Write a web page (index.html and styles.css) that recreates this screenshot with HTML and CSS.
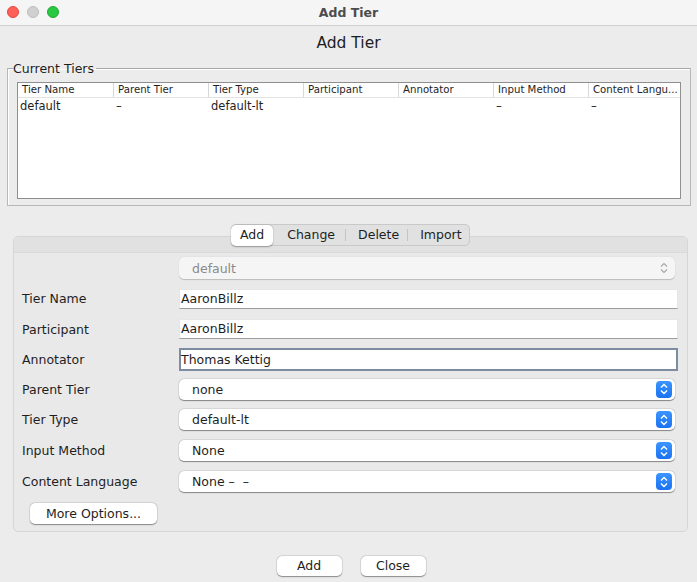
FILE: index.html
```html
<!DOCTYPE html>
<html>
<head>
<meta charset="utf-8">
<link rel="stylesheet" href="styles.css">
</head>
<body>
<div class="window">
  <div class="titlebar">
    <div class="lights">
      <span class="light red"></span>
      <span class="light grey"></span>
      <span class="light green"></span>
    </div>
    <div class="wtitle">Add Tier</div>
  </div>
  <div class="content">
    <div class="heading">Add Tier</div>
    <fieldset class="group">
      <legend>Current Tiers</legend>
      <div class="table">
        <div class="row head">
          <div class="cell">Tier Name</div>
          <div class="cell">Parent Tier</div>
          <div class="cell">Tier Type</div>
          <div class="cell">Participant</div>
          <div class="cell">Annotator</div>
          <div class="cell">Input Method</div>
          <div class="cell last">Content Langu...</div>
        </div>
        <div class="row data">
          <div class="cell">default</div>
          <div class="cell">–</div>
          <div class="cell">default-lt</div>
          <div class="cell"></div>
          <div class="cell"></div>
          <div class="cell">–</div>
          <div class="cell last">–</div>
        </div>
      </div>
    </fieldset>

    <div class="tabwrap">
      <div class="tabs">
        <div class="tab sel">Add</div>
        <div class="tab t-change">Change</div>
        <div class="sep"></div>
        <div class="tab t-delete">Delete</div>
        <div class="sep"></div>
        <div class="tab t-import">Import</div>
      </div>
      <div class="panel">
        <div class="band"></div>
        <div class="form">
          <div class="frow r1">
            <div class="label"></div>
            <div class="combo disabled"><span>default</span>
              <svg class="arrows" width="10" height="14" viewBox="0 0 10 14"><path d="M2 5.5 L5 2.5 L8 5.5 M2 8.5 L5 11.5 L8 8.5" fill="none" stroke="#a8a8a8" stroke-width="1.2"/></svg>
            </div>
          </div>
          <div class="frow r2">
            <div class="label">Tier Name</div>
            <div class="field">AaronBillz</div>
          </div>
          <div class="frow r3">
            <div class="label">Participant</div>
            <div class="field">AaronBillz</div>
          </div>
          <div class="frow r4">
            <div class="label">Annotator</div>
            <div class="field focus">Thomas Kettig</div>
          </div>
          <div class="frow r5">
            <div class="label">Parent Tier</div>
            <div class="combo"><span>none</span><span class="btn"><svg width="10" height="14" viewBox="0 0 10 14"><path d="M2 5.5 L5 2.5 L8 5.5 M2 8.5 L5 11.5 L8 8.5" fill="none" stroke="#fff" stroke-width="1.4"/></svg></span></div>
          </div>
          <div class="frow r6">
            <div class="label">Tier Type</div>
            <div class="combo"><span>default-lt</span><span class="btn"><svg width="10" height="14" viewBox="0 0 10 14"><path d="M2 5.5 L5 2.5 L8 5.5 M2 8.5 L5 11.5 L8 8.5" fill="none" stroke="#fff" stroke-width="1.4"/></svg></span></div>
          </div>
          <div class="frow r7">
            <div class="label">Input Method</div>
            <div class="combo"><span>None</span><span class="btn"><svg width="10" height="14" viewBox="0 0 10 14"><path d="M2 5.5 L5 2.5 L8 5.5 M2 8.5 L5 11.5 L8 8.5" fill="none" stroke="#fff" stroke-width="1.4"/></svg></span></div>
          </div>
          <div class="frow r8">
            <div class="label">Content Language</div>
            <div class="combo"><span>None –&nbsp; –</span><span class="btn"><svg width="10" height="14" viewBox="0 0 10 14"><path d="M2 5.5 L5 2.5 L8 5.5 M2 8.5 L5 11.5 L8 8.5" fill="none" stroke="#fff" stroke-width="1.4"/></svg></span></div>
          </div>
          <div class="more">
            <div class="button">More Options...</div>
          </div>
        </div>
      </div>
    </div>

    <div class="footer">
      <div class="button fb">Add</div>
      <div class="button fb">Close</div>
    </div>
  </div>
</div>
</body>
</html>
```
FILE: styles.css
```css
* { box-sizing: border-box; }
html, body { margin: 0; padding: 0; }
body {
  width: 697px;
  height: 582px;
  overflow: hidden;
  background: #ececec;
  font-family: "DejaVu Sans", "Noto Sans", sans-serif;
  color: #1e1e1e;
}
.window { width: 697px; height: 582px; background: #ececec; }
.titlebar {
  height: 26px;
  background: #f5f5f5;
  border-bottom: 1px solid #cfcfcf;
  display: flex;
  align-items: center;
  justify-content: center;
  position: relative;
}
.lights {
  position: absolute;
  left: 7px;
  top: 6px;
  display: flex;
  gap: 8px;
}
.light { width: 12px; height: 12px; border-radius: 50%; display: block; }
.red { background: #fe5f57; border: 0.5px solid #e2463f; }
.grey { background: #d0d0d0; border: 0.5px solid #bdbdbd; }
.green { background: #28c840; border: 0.5px solid #1ea931; }
.wtitle { font-size: 12.5px; font-weight: bold; color: #4c4c4c; }

.content { padding: 0 7px 0 7px; }
.heading {
  text-align: center;
  font-size: 15.5px;
  color: #1e1e1e;
  height: 36px;
  padding-top: 8px;
}
.group {
  margin: 0;
  border: 1px solid #b8b8b8;
  border-top-color: #a8a8a8;
  padding: 0 9px 6px 9px;
  box-shadow: inset 1px 1px 0 #fff;
}
.group legend {
  font-size: 12.5px;
  padding: 0 2px 0 0;
  margin-left: -4px;
  color: #1e1e1e;
  line-height: 13px;
}
.table {
  background: #fff;
  border: 1px solid #8f8f8f;
  height: 117px;
  margin-top: 7px;
}
.row { display: flex; }
.cell {
  width: 95px;
  flex: none;
  overflow: hidden;
  white-space: nowrap;
}
.cell.last { width: 91px; }
.head { height: 15px; border-bottom: 1px solid #e2e2e2; }
.head .cell {
  font-size: 10.2px;
  line-height: 14px;
  padding-left: 4px;
  border-right: 1px solid #d8d8d8;
}
.head .cell:first-child { width: 96px; }
.head .cell.last { border-right: none; }
.data .cell {
  font-size: 11.5px;
  line-height: 16px;
  padding-left: 2px;
}
.data .cell:first-child { width: 96px; }

.tabwrap { margin-top: 18px; padding: 12px 2px 0 6px; position: relative; }
.tabs {
  position: absolute;
  left: 224px;
  top: 0;
  z-index: 2;
  display: flex;
  align-items: center;
  height: 22px;
  background: #e1e1e1;
  border: 1px solid #c9c9c9;
  border-radius: 5px;
}
.tab {
  font-size: 12.5px;
  height: 20px;
  line-height: 19px;
  color: #1e1e1e;
}
.tab.sel {
  background: #fff;
  border-radius: 5px;
  box-shadow: 0 0.5px 1.5px rgba(0,0,0,0.35);
  padding: 0 9px;
  margin-left: -1px;
  height: 21px;
}
.t-change { padding: 0 10px 0 14px; }
.t-delete { padding: 0 8px 0 12px; }
.t-import { padding: 0 7px 0 12px; }
.sep { width: 1px; height: 12px; background: #c4c4c4; }
.panel {
  border: 1px solid #d6d6d6;
  border-radius: 5px;
  background: #e9e9e9;
  padding-bottom: 7px;
}
.band {
  height: 16px;
  background: #e1e1e1;
  border-bottom: 1px solid #dadada;
  border-radius: 5px 5px 0 0;
}
.form { padding: 0 10px 0 8px; display: flex; flex-direction: column; }
.frow { display: flex; align-items: center; }
.r1 { height: 30px; }
.r2 { height: 31px; }
.r3 { height: 30px; }
.r4 { height: 30px; }
.r5 { height: 30px; }
.r6 { height: 31px; }
.r7 { height: 31px; }
.r8 { height: 31px; }
.label { width: 157px; flex: none; font-size: 12.5px; color: #1e1e1e; }
.field {
  flex: 1;
  height: 20px;
  background: #fff;
  border: 1px solid #e6e6e6;
  border-bottom-color: #9d9d9d;
  font-size: 12.5px;
  line-height: 18px;
  padding-left: 1px;
  margin-right: -1px;
}
.field.focus {
  height: 23px;
  border: 2px solid #7d8ca0;
  line-height: 19px;
  padding-left: 0;
  margin-right: -1px;
}
.combo {
  flex: 1;
  height: 21px;
  background: #fff;
  border-radius: 5px;
  box-shadow: 0 0.5px 1px rgba(0,0,0,0.4), 0 0 0 0.5px rgba(0,0,0,0.08);
  display: flex;
  align-items: center;
  justify-content: space-between;
  padding: 0 3px 0 13px;
  font-size: 12.5px;
  margin-right: 2px;
}
.combo.disabled {
  background: #f5f5f5;
  color: #8a8a8a;
  box-shadow: 0 0.5px 1px rgba(0,0,0,0.2);
  height: 22px;
  padding-right: 6px;
}
.btn {
  width: 16px;
  height: 17px;
  border-radius: 4px;
  background: linear-gradient(#3d95ff, #1a72f2);
  display: flex;
  align-items: center;
  justify-content: center;
}
.more { padding: 6px 0 0 8px; }
.button {
  display: inline-block;
  background: #fff;
  border-radius: 5px;
  box-shadow: 0 0.5px 1.2px rgba(0,0,0,0.4), 0 0 0 0.5px rgba(0,0,0,0.08);
  font-size: 12.5px;
  height: 21px;
  line-height: 21px;
  text-align: center;
  width: 127px;
  color: #1e1e1e;
}
.footer {
  display: flex;
  justify-content: center;
  gap: 19px;
  padding-left: 5px;
  margin-top: 24px;
}
.fb { width: 65px; height: 20px; line-height: 20px; }
```
